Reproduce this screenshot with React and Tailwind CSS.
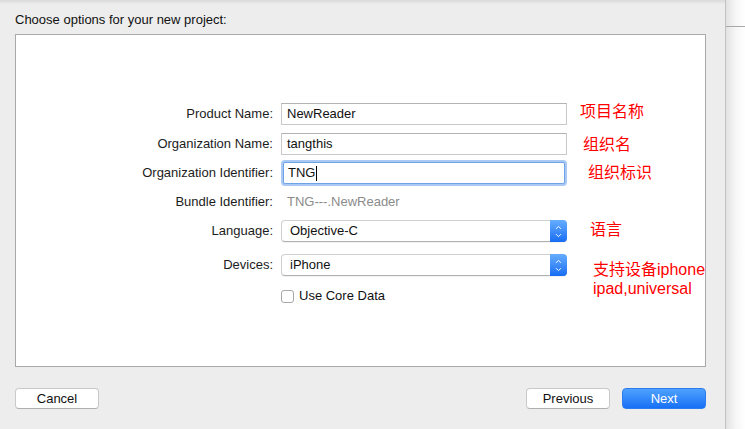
import { ChevronUp, ChevronDown } from 'lucide-react'

const sans = 'font-["Helvetica_Neue","Liberation_Sans",Arial,sans-serif]'

function TextField({ value, focused }) {
  if (focused) {
    return (
      <div className="w-[286px] h-[26px] rounded-[4px] bg-[#a9c9f4] p-[2px]">
        <div className="h-full bg-white border border-[#6fa3e8] rounded-[2px] flex items-center px-[4px] text-[13px] text-[#111]">
          {value}
          <span className="inline-block w-px h-[15px] bg-black ml-px" />
        </div>
      </div>
    )
  }
  return (
    <div className="w-[286px] h-[22px] bg-white border border-[#c9c9c9] border-t-[#b3b3b3] flex items-center px-[5px] text-[13px] text-[#111]">
      {value}
    </div>
  )
}

function PopUp({ value }) {
  return (
    <div className="w-[286px] h-[22px] bg-white border border-[#cfcfcf] border-b-[#b1b1b1] rounded-[4px] flex items-stretch shadow-[0_1px_0_rgba(0,0,0,0.05)]">
      <div className="flex-1 flex items-center pl-[8px] text-[13px] text-[#111]">{value}</div>
      <div className="w-[17px] -my-px -mr-px rounded-r-[4px] bg-gradient-to-b from-[#66adff] to-[#166cf3] flex flex-col items-center justify-center">
        <ChevronUp size={9} strokeWidth={2.5} className="text-white -mb-[1px]" />
        <ChevronDown size={9} strokeWidth={2.5} className="text-white" />
      </div>
    </div>
  )
}

function Row({ label, children, className = '' }) {
  return (
    <div className={`flex items-center gap-[8px] ${className}`}>
      <div className="w-[257px] text-right text-[13px] text-[#1c1c1c]">{label}</div>
      {children}
    </div>
  )
}

function Button({ children, primary }) {
  if (primary) {
    return (
      <button className="w-[84px] h-[21px] rounded-[4px] bg-gradient-to-b from-[#4ea1fd] to-[#1670f5] border border-[#2a7cf0] text-white text-[13px] leading-none">
        {children}
      </button>
    )
  }
  return (
    <button className="h-[21px] rounded-[4px] bg-white border border-[#c9c9c9] border-b-[#afafaf] text-[13px] text-[#111] leading-none">
      {children}
    </button>
  )
}

export default function App() {
  return (
    <div className={`relative w-[745px] h-[429px] flex overflow-hidden ${sans}`}>
      {/* Sheet */}
      <div className="w-[726px] h-full bg-[#ededed] border-r border-[#c2c2c2] flex flex-col bg-gradient-to-b from-[#d9d9d9] via-[#ededed] via-[1%] to-[#ededed]">
        <div className="px-[15px] pt-[10px] h-[34px] text-[13px] text-[#111]">Choose options for your new project:</div>

        <div className="ml-[15px] w-[691px] h-[333px] bg-white border border-[#a9a9a9] flex flex-col">
          <Row label="Product Name:" className="mt-[68px]">
            <TextField value="NewReader" />
          </Row>
          <Row label="Organization Name:" className="mt-[8px]">
            <TextField value="tangthis" />
          </Row>
          <Row label="Organization Identifier:" className="mt-[5px]">
            <TextField value="TNG" focused />
          </Row>
          <Row label="Bundle Identifier:" className="mt-[5px] h-[22px]">
            <div className="pl-[6px] text-[13px] text-[#8b8b8b]">TNG---.NewReader</div>
          </Row>
          <Row label="Language:" className="mt-[7px]">
            <PopUp value="Objective-C" />
          </Row>
          <Row label="Devices:" className="mt-[12px]">
            <PopUp value="iPhone" />
          </Row>
          <Row label="" className="mt-[9px] h-[22px]">
            <div className="flex items-center gap-[5px]">
              <div className="w-[13px] h-[13px] rounded-[3px] border border-[#a8a8a8] bg-white" />
              <span className="text-[13px] text-[#111]">Use Core Data</span>
            </div>
          </Row>
        </div>

        <div className="ml-[15px] w-[691px] mt-[21px] flex items-center">
          <Button><span className="block w-[82px]">Cancel</span></Button>
          <div className="flex-1" />
          <div className="flex gap-[12px]">
            <Button><span className="block w-[82px]">Previous</span></Button>
            <Button primary>Next</Button>
          </div>
        </div>
      </div>

      {/* Background window edge */}
      <div className="flex-1 h-full bg-gradient-to-r from-[#e2e2e2] via-[#f6f6f6] to-white flex flex-col">
        <div className="h-[26px]" />
        <div className="h-px bg-[#a9a9a9]" />
      </div>

      {/* Annotations */}
      <div className={`absolute inset-0 pointer-events-none text-[#ff0000] text-[16px] leading-[19px] font-["Liberation_Sans","Noto_Sans_CJK_SC",sans-serif]`}>
        <div className="absolute left-[580px] top-[102px]">项目名称</div>
        <div className="absolute left-[583px] top-[135px]">组织名</div>
        <div className="absolute left-[588px] top-[163px]">组织标识</div>
        <div className="absolute left-[590px] top-[220px]">语言</div>
        <div className="absolute left-[593px] top-[260px]">
          支持设备iphone
          <br />
          ipad,universal
        </div>
      </div>
    </div>
  )
}
